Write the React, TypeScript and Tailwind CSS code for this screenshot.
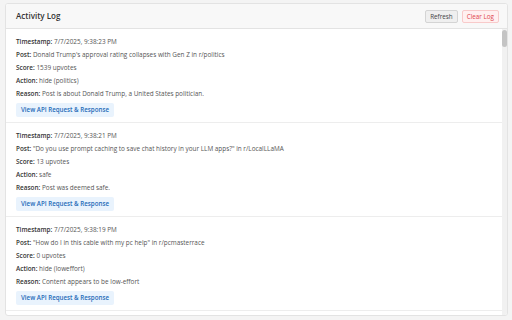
import React from 'react';

type Entry = {
  timestamp: string;
  post: string;
  score: number;
  action: string;
  reason: string;
};

const entries: Entry[] = [
  {
    timestamp: '7/7/2025, 9:38:23 PM',
    post: "Donald Trump's approval rating collapses with Gen Z in r/politics",
    score: 1539,
    action: 'hide (politics)',
    reason: 'Post is about Donald Trump, a United States politician.',
  },
  {
    timestamp: '7/7/2025, 9:38:21 PM',
    post: '"Do you use prompt caching to save chat history in your LLM apps?" in r/LocalLLaMA',
    score: 13,
    action: 'safe',
    reason: 'Post was deemed safe.',
  },
  {
    timestamp: '7/7/2025, 9:38:19 PM',
    post: '"How do I in this cable with my pc help" in r/pcmasterrace',
    score: 0,
    action: 'hide (loweffort)',
    reason: 'Content appears to be low-effort',
  },
];

function Line({ label, children }: { label: string; children: React.ReactNode }) {
  return (
    <div className="leading-[13px] text-[#555]">
      <span className="font-semibold text-[#333]">{label}:</span> {children}
    </div>
  );
}

function LogEntry({ entry }: { entry: Entry }) {
  return (
    <div className="border-b border-[#ededed] pl-[10px] pr-2 pt-[6px] pb-[5px]">
      <Line label="Timestamp">{entry.timestamp}</Line>
      <Line label="Post">{entry.post}</Line>
      <Line label="Score">{entry.score} upvotes</Line>
      <Line label="Action">{entry.action}</Line>
      <Line label="Reason">{entry.reason}</Line>
      <button className="mt-[3px] h-[14px] rounded-[2px] bg-[#e9f3fd] px-[5px] text-[6.2px] font-semibold leading-[14px] text-[#1f6bb8]">
        View API Request &amp; Response
      </button>
    </div>
  );
}

export default function App() {
  return (
    <div
      className="h-[320px] w-[512px] bg-[#f4f4f4] pb-[4px] pl-[5px] pr-[4px] pt-[3px] text-[6.4px]"
      style={{ fontFamily: '"Open Sans", "Noto Sans", sans-serif' }}
    >
      <div className="flex h-full flex-col overflow-hidden rounded-[3px] border border-[#e3e3e3] bg-white">
        <div className="flex h-[25px] shrink-0 items-center justify-between border-b border-[#e3e3e3] bg-[#f8f8f8] pl-[10px] pr-[8px]">
          <h2 className="text-[8px] font-semibold text-[#333]">Activity Log</h2>
          <div className="flex gap-[4px]">
            <button className="h-[13px] rounded-[2px] border border-[#d4d4d4] bg-[#efefef] px-[4px] text-[6.3px] leading-[11px] text-[#444]">
              Refresh
            </button>
            <button className="h-[13px] rounded-[2px] border border-[#f8caca] bg-[#fff0f0] px-[4px] text-[6.3px] leading-[11px] text-[#e0474c]">
              Clear Log
            </button>
          </div>
        </div>
        <div className="flex min-h-0 flex-1">
          <div className="min-w-0 flex-1 overflow-hidden">
            {entries.map((entry, i) => (
              <LogEntry key={i} entry={entry} />
            ))}
          </div>
          <div className="w-[5px] shrink-0 bg-[#f1f1f1] pt-[1px]">
            <div className="h-[17px] rounded-[3px] bg-[#c4c4c4]" />
          </div>
        </div>
      </div>
    </div>
  );
}
